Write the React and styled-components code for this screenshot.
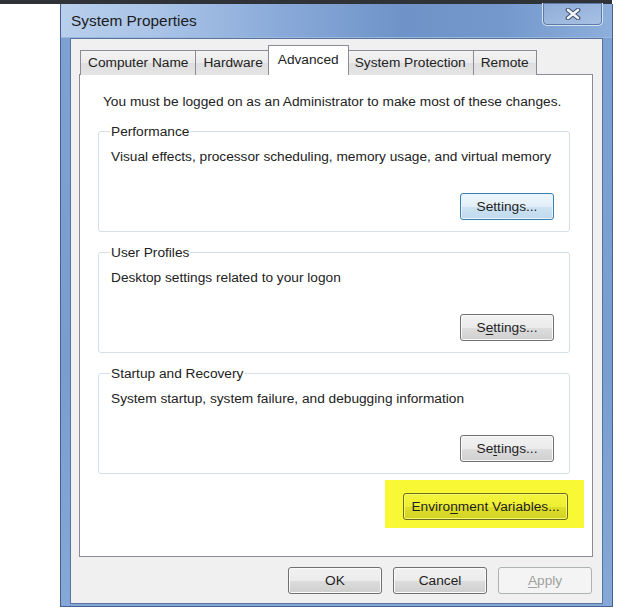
import React from 'react';
import styled, { createGlobalStyle, css } from 'styled-components';

const GlobalStyle = createGlobalStyle`
  html, body {
    margin: 0;
    padding: 0;
    background: #fff;
  }

  body {
    font-family: 'Liberation Sans', Arial, sans-serif;
    font-size: 13.7px;
    color: #222;
  }
`;

const Page = styled.div`
  width: 637px;
  height: 611px;
  overflow: hidden;
  background: #fff;
`;

const TopStrip = styled.div`
  width: 612px;
  height: 4px;
  background: #2f3337;
`;

const Window = styled.div`
  margin-left: 60px;
  width: 553px;
  height: 603px;
  box-sizing: border-box;
  display: flex;
  flex-direction: column;
  border: 1px solid #44628d;
  border-top: none;
  background: linear-gradient(180deg, #7fa2d4 0%, #7a9dd0 60%, #86a8d8 100%);
  padding: 0 9px 2px 9px;
`;

const TitleBar = styled.div`
  height: 33px;
  margin: 0 -9px;
  padding: 0 9px 0 10px;
  display: flex;
  justify-content: space-between;
  align-items: flex-start;
  background: linear-gradient(
    90deg,
    #b8cfec 0%,
    #a9c3e7 18%,
    #89aad9 40%,
    #6f93c8 62%,
    #7498cc 80%,
    #8eafdc 100%
  );
  border-bottom: 1px solid #9db7dc;
`;

const Title = styled.span`
  font-size: 15.4px;
  line-height: 33px;
  color: #1c1c1c;
`;

const CloseButton = styled.div`
  width: 59px;
  height: 22px;
  margin-top: -1px;
  display: flex;
  align-items: center;
  justify-content: center;
  border: 1px solid #d6e2f2;
  border-top: none;
  border-radius: 0 0 5px 5px;
  box-shadow: inset 0 0 0 1px #5a7aa8;
  background: linear-gradient(180deg, rgba(255, 255, 255, 0.12), rgba(255, 255, 255, 0.25));
`;

const ClientArea = styled.div`
  flex: 1;
  display: flex;
  flex-direction: column;
  background: #f0f0f0;
  border: 1px solid #56749e;
  padding: 7px 9px 0 8px;
`;

const TabStrip = styled.div`
  height: 29px;
  display: flex;
  align-items: flex-end;
  padding-left: 1px;
  position: relative;
  z-index: 1;
`;

const Tab = styled.div`
  height: 25px;
  line-height: 24px;
  padding: 0 7px;
  box-sizing: border-box;
  border: 1px solid #898c95;
  border-bottom: none;
  margin-right: -1px;
  background: linear-gradient(180deg, #f3f3f3 0%, #ebebeb 50%, #dedede 51%, #e5e5e5 100%);
  white-space: nowrap;

  ${(p) =>
    p.$active &&
    css`
      height: 30px;
      line-height: 28px;
      padding: 0 9px 2px;
      margin: 0 -1px 0 -2px;
      background: #fff;
      position: relative;
      z-index: 2;
      & + div {
        margin-left: -1px;
      }
    `}
`;

const TabPanel = styled.div`
  height: 483px;
  box-sizing: border-box;
  margin-top: -1px;
  background: #fff;
  border: 1px solid #898c95;
  padding: 18px 22px 0 18px;
  display: flex;
  flex-direction: column;
`;

const Intro = styled.p`
  margin: 0 0 20px 5px;
  line-height: 18px;
  white-space: nowrap;
`;

const GroupBox = styled.div`
  height: 101px;
  box-sizing: border-box;
  border: 1px solid #d5dfe5;
  border-radius: 3px;
  padding: 0 15px 11px 11px;
  display: flex;
  flex-direction: column;

  & + & {
    margin-top: 20px;
  }
`;

const Legend = styled.span`
  align-self: flex-start;
  margin-top: -9px;
  padding: 0 1px;
  line-height: 17px;
  background: #fff;
`;

const Description = styled.span`
  margin: 8px 0 0 1px;
  line-height: 18px;
  white-space: nowrap;
`;

const GroupFooter = styled.div`
  margin-top: auto;
  display: flex;
  justify-content: flex-end;
`;

const Highlight = styled.div`
  align-self: flex-end;
  margin: 6px -14px 0 0;
  padding: 13px 16px 8px 18px;
  background: #f8f834;
`;

const buttonLooks = {
  normal: css`
    border-color: #707070;
    background: linear-gradient(180deg, #f2f2f2 0%, #ebebeb 50%, #dddddd 51%, #cfcfcf 100%);
    box-shadow: inset 0 0 0 1px #fafafa;
  `,
  focus: css`
    border-color: #3c7fb1;
    background: linear-gradient(180deg, #eef6fb 0%, #e2eff8 50%, #cde3f2 51%, #bfd9ec 100%);
    box-shadow: inset 0 0 0 1px #e8f4fb;
  `,
  marked: css`
    border-color: #6b6a1e;
    background: linear-gradient(180deg, #f4f43a 0%, #eeee34 50%, #dede2a 51%, #d2d226 100%);
    box-shadow: inset 0 0 0 1px #fbfb6a;
  `,
  disabled: css`
    border-color: #adb2b5;
    background: #f4f4f4;
    color: #a0a0a0;
  `,
};

const Button = styled.button`
  width: ${(p) => p.$width || 94}px;
  height: 27px;
  padding: 0;
  border: 1px solid;
  border-radius: 3px;
  font-family: inherit;
  font-size: 13.7px;
  color: #1e1e1e;
  ${(p) => buttonLooks[p.$look || 'normal']}
`;

const Key = styled.span`
  text-decoration: underline;
  text-underline-offset: 2px;
`;

const DialogButtons = styled.div`
  margin-top: 10px;
  display: flex;
  justify-content: flex-end;
  gap: 11px;
  padding-right: 1px;
`;

const groups = [
  {
    title: 'Performance',
    text: 'Visual effects, processor scheduling, memory usage, and virtual memory',
    button: <>Settings...</>,
    look: 'focus',
  },
  {
    title: 'User Profiles',
    text: 'Desktop settings related to your logon',
    button: (
      <>
        S<Key>e</Key>ttings...
      </>
    ),
  },
  {
    title: 'Startup and Recovery',
    text: 'System startup, system failure, and debugging information',
    button: (
      <>
        Se<Key>t</Key>tings...
      </>
    ),
  },
];

const tabs = ['Computer Name', 'Hardware', 'Advanced', 'System Protection', 'Remote'];

function CloseGlyph() {
  return (
    <svg width='16' height='12' viewBox='0 0 16 12'>
      <path d='M3 2 L13 10 M13 2 L3 10' stroke='#3d4f6b' strokeWidth='4.6' strokeLinecap='round' />
      <path d='M3 2 L13 10 M13 2 L3 10' stroke='#f4f6fa' strokeWidth='2.6' strokeLinecap='round' />
    </svg>
  );
}

export default function App() {
  return (
    <Page>
      <GlobalStyle />
      <TopStrip />
      <Window>
        <TitleBar>
          <Title>System Properties</Title>
          <CloseButton>
            <CloseGlyph />
          </CloseButton>
        </TitleBar>

        <ClientArea>
          <TabStrip>
            {tabs.map((t) => (
              <Tab key={t} $active={t === 'Advanced'}>
                {t}
              </Tab>
            ))}
          </TabStrip>

          <TabPanel>
            <Intro>You must be logged on as an Administrator to make most of these changes.</Intro>

            {groups.map((g) => (
              <GroupBox key={g.title}>
                <Legend>{g.title}</Legend>
                <Description>{g.text}</Description>
                <GroupFooter>
                  <Button $look={g.look}>{g.button}</Button>
                </GroupFooter>
              </GroupBox>
            ))}

            <Highlight>
              <Button $look='marked' $width={165}>
                Enviro<Key>n</Key>ment Variables...
              </Button>
            </Highlight>
          </TabPanel>

          <DialogButtons>
            <Button>OK</Button>
            <Button>Cancel</Button>
            <Button $look='disabled'>
              <Key>A</Key>pply
            </Button>
          </DialogButtons>
        </ClientArea>
      </Window>
    </Page>
  );
}
